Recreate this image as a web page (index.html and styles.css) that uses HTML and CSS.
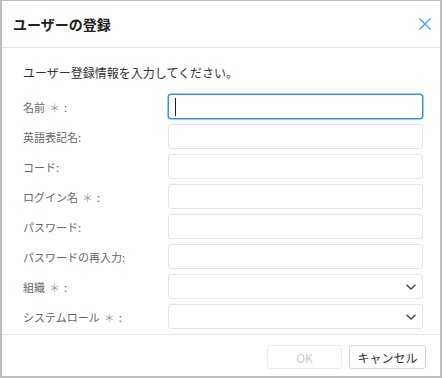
FILE: index.html
```html
<!DOCTYPE html>
<html lang="ja">
<head>
    <meta charset="UTF-8">
    <title>ユーザーの登録</title>
    <link rel="stylesheet" href="styles.css">
</head>
<body>
    <div class="dialog">
        <div class="dialog-header">
            <h2 class="dialog-title">ユーザーの登録</h2>
            <button class="close-btn" title="閉じる">
                <svg width="12" height="12" viewBox="0 0 12 12">
                    <path d="M0.5 0.5 L11.5 11.5 M11.5 0.5 L0.5 11.5" stroke="#4a9be0" stroke-width="1.4" fill="none"/>
                </svg>
            </button>
        </div>

        <div class="dialog-body">
            <p class="intro">ユーザー登録情報を入力してください。</p>

            <div class="form-grid">
                <label class="form-label">名前<span class="req">＊</span>:</label>
                <div class="field focused"><input type="text"><span class="caret"></span></div>

                <label class="form-label">英語表記名:</label>
                <div class="field"><input type="text"></div>

                <label class="form-label">コード:</label>
                <div class="field"><input type="text"></div>

                <label class="form-label">ログイン名<span class="req">＊</span>:</label>
                <div class="field"><input type="text"></div>

                <label class="form-label">パスワード:</label>
                <div class="field"><input type="password"></div>

                <label class="form-label">パスワードの再入力:</label>
                <div class="field"><input type="password"></div>

                <label class="form-label">組織<span class="req">＊</span>:</label>
                <div class="field select">
                    <svg class="chevron" width="10" height="6" viewBox="0 0 10 6">
                        <path d="M0.5 0.8 L5 5 L9.5 0.8" stroke="#444" stroke-width="1.3" fill="none"/>
                    </svg>
                </div>

                <label class="form-label">システムロール<span class="req">＊</span>:</label>
                <div class="field select">
                    <svg class="chevron" width="10" height="6" viewBox="0 0 10 6">
                        <path d="M0.5 0.8 L5 5 L9.5 0.8" stroke="#444" stroke-width="1.3" fill="none"/>
                    </svg>
                </div>
            </div>
        </div>

        <div class="dialog-footer">
            <button class="btn btn-ok" disabled>OK</button>
            <button class="btn btn-cancel">キャンセル</button>
        </div>
    </div>
</body>
</html>
```

FILE: styles.css
```css
* {
    box-sizing: border-box;
}
body {
    margin: 0;
    background: #fff;
    font-family: "Noto Sans CJK JP", "Noto Sans", sans-serif;
    color: #333;
}
.dialog {
    width: 442px;
    height: 378px;
    border: 2px solid #bdbdbd;
    border-top-width: 1px;
    display: flex;
    flex-direction: column;
    background: #fff;
}
.dialog-header {
    height: 47px;
    display: flex;
    align-items: center;
    justify-content: space-between;
    padding: 0 9px 0 11px;
    border-bottom: 1px solid #e6e6e6;
}
.dialog-title {
    margin: 0;
    font-size: 14px;
    font-weight: 700;
    color: #222;
    line-height: 20px;
}
.close-btn {
    background: none;
    border: none;
    padding: 0;
    width: 12px;
    height: 12px;
    display: flex;
    cursor: pointer;
}
.dialog-body {
    flex: 1;
    padding: 16px 17px 0 21px;
}
.intro {
    margin: 0 0 12px;
    font-size: 12px;
    line-height: 18px;
    color: #333;
}
.form-grid {
    display: grid;
    grid-template-columns: 145px 1fr;
    grid-auto-rows: 25px;
    row-gap: 5px;
}
.form-label {
    display: flex;
    align-items: center;
    font-size: 11px;
    color: #666;
    white-space: pre;
}
.req {
    color: #999;
    margin: 0 4px 0 4px;
}
.field {
    position: relative;
    border: 1px solid #e4e4e4;
    border-radius: 3px;
    background: #fff;
}
.field input {
    width: 100%;
    height: 100%;
    border: none;
    outline: none;
    background: transparent;
    padding: 0 6px;
    font-family: inherit;
    font-size: 12px;
}
.field.focused {
    border: 1px solid #3a93d8;
    box-shadow: 0 0 0 0.5px #3a93d8;
}
.caret {
    position: absolute;
    left: 6px;
    top: 3px;
    width: 1px;
    height: 18px;
    background: #222;
}
.select .chevron {
    position: absolute;
    right: 6px;
    top: 9px;
}
.dialog-footer {
    height: 42px;
    border-top: 1px solid #e6e6e6;
    display: flex;
    justify-content: flex-end;
    align-items: flex-start;
    gap: 7px;
    padding: 10px 14px 0;
}
.btn {
    height: 24px;
    border-radius: 3px;
    background: #fff;
    font-family: inherit;
    font-size: 12px;
    padding: 0;
    cursor: pointer;
}
.btn-ok {
    width: 75px;
    border: 1px solid #ececec;
    color: #ccc;
    cursor: default;
}
.btn-cancel {
    width: 77px;
    border: 1px solid #d6d6d6;
    color: #333;
}
```
